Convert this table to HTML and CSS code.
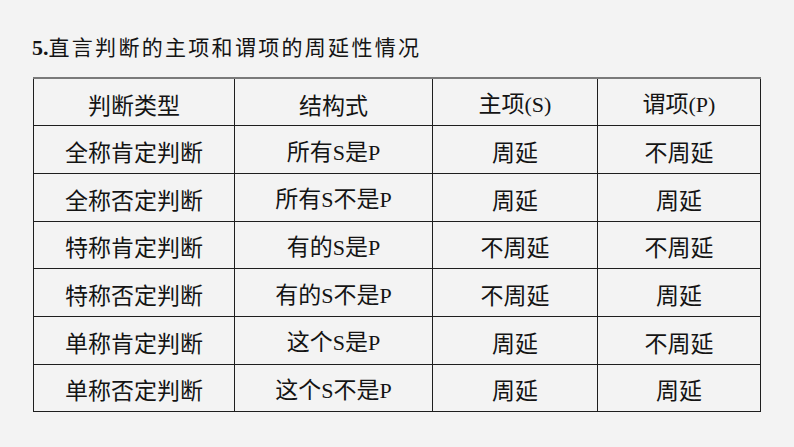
FILE: index.html
```html
<!DOCTYPE html>
<html lang="zh">
<head>
<meta charset="utf-8">
<title>直言判断的主项和谓项的周延性情况</title>
<link rel="stylesheet" href="styles.css">
</head>
<body>
<div class="page">
  <h1 class="title"><span class="num">5.</span>直言判断的主项和谓项的周延性情况</h1>
  <table class="grid">
    <colgroup>
      <col class="c1"><col class="c2"><col class="c3"><col class="c4">
    </colgroup>
    <thead>
      <tr><th>判断类型</th><th>结构式</th><th>主项<span class="lat">(S)</span></th><th>谓项<span class="lat">(P)</span></th></tr>
    </thead>
    <tbody>
      <tr><td>全称肯定判断</td><td>所有<span class="lat">S</span>是<span class="lat">P</span></td><td>周延</td><td>不周延</td></tr>
      <tr><td>全称否定判断</td><td>所有<span class="lat">S</span>不是<span class="lat">P</span></td><td>周延</td><td>周延</td></tr>
      <tr><td>特称肯定判断</td><td>有的<span class="lat">S</span>是<span class="lat">P</span></td><td>不周延</td><td>不周延</td></tr>
      <tr><td>特称否定判断</td><td>有的<span class="lat">S</span>不是<span class="lat">P</span></td><td>不周延</td><td>周延</td></tr>
      <tr><td>单称肯定判断</td><td>这个<span class="lat">S</span>是<span class="lat">P</span></td><td>周延</td><td>不周延</td></tr>
      <tr><td>单称否定判断</td><td>这个<span class="lat">S</span>不是<span class="lat">P</span></td><td>周延</td><td>周延</td></tr>
    </tbody>
  </table>
</div>
</body>
</html>
```
FILE: styles.css
```css
html, body {
  margin: 0;
  padding: 0;
  background: #f3f3f3;
}
.page {
  width: 794px;
  height: 447px;
  padding: 32px 0 0 32px;
  box-sizing: border-box;
  color: #141414;
  font-family: "Noto Sans CJK SC", "Noto Sans", sans-serif;
}
.title {
  margin: 0;
  font-size: 21px;
  font-weight: normal;
  letter-spacing: 2.3px;
  line-height: 28px;
}
.num {
  font-family: "Liberation Serif", serif;
  font-weight: bold;
  font-size: 22px;
  letter-spacing: 0;
}
.grid {
  margin: 15px 0 0 1px;
  border-collapse: collapse;
  table-layout: fixed;
  width: 727px;
  font-size: 23px;
}
.c1 { width: 201px; }
.c2 { width: 198px; }
.c3 { width: 165px; }
.c4 { width: 163px; }
.grid th, .grid td {
  border: 1px solid #1e1e1e;
  height: 47.7px;
  padding: 3px 0 0 0;
  box-sizing: border-box;
  text-align: center;
  vertical-align: middle;
  font-weight: normal;
  line-height: 30px;
}
.grid thead th {
  border-top: 2px solid #7a7a7a;
}
.lat {
  font-family: "Liberation Serif", serif;
  font-size: 22px;
}
```
